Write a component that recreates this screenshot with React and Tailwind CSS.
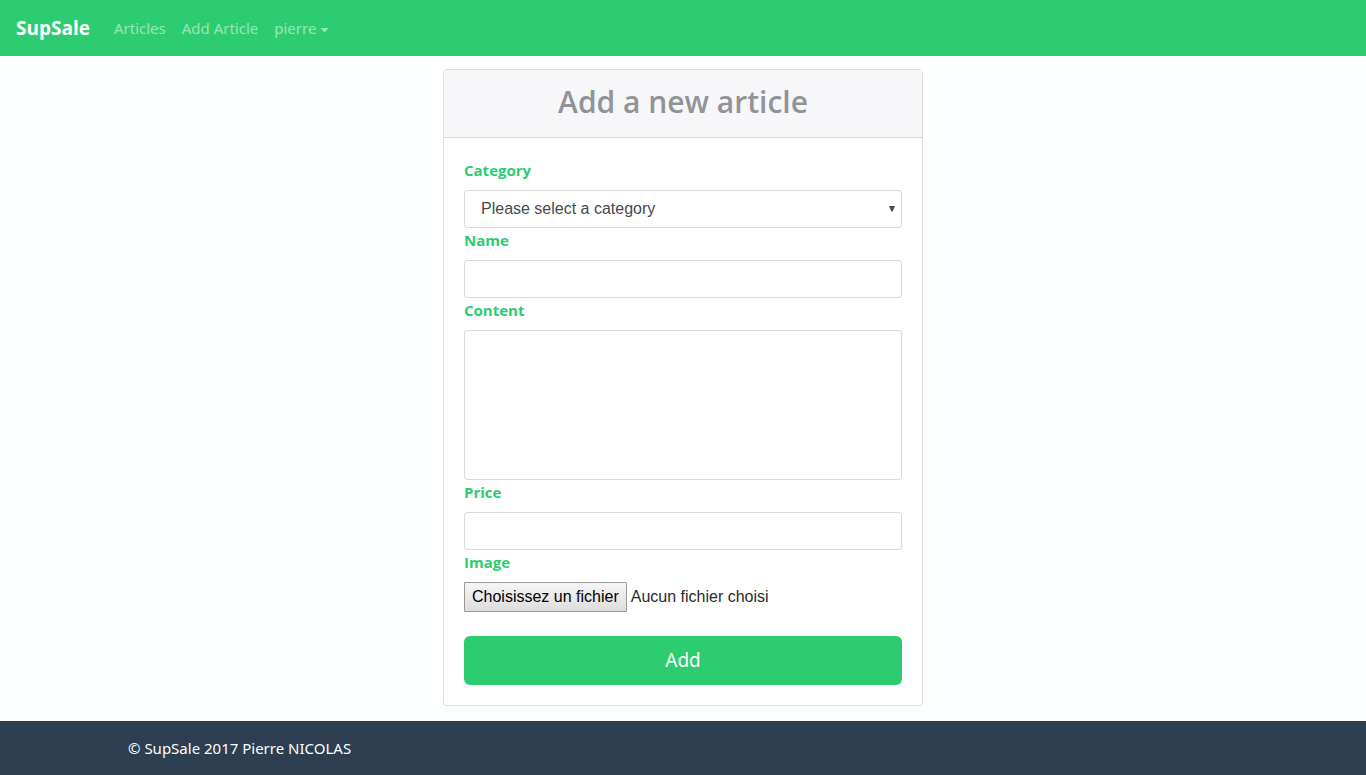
import { useState } from "react";

const labelClass =
  "mb-2 block self-start text-[15px] leading-6 font-bold text-[#2ecc71]";
const fieldClass =
  "block w-full rounded border border-black/15 bg-white px-3 font-['Liberation_Sans',sans-serif] text-base text-[#464a4c] outline-none focus:border-[#2ecc71]";

function Navbar() {
  const linkClass = "text-white/50 hover:text-white/75";
  return (
    <nav className="flex h-14 items-center bg-[#2ecc71] px-4">
      <a href="#home" className="mr-6 text-[19px] leading-[30px] font-bold text-white">
        SupSale
      </a>
      <ul className="flex items-center gap-4 font-['Noto_Sans',sans-serif] text-[15px] leading-6">
        <li>
          <a href="#articles" className={linkClass}>Articles</a>
        </li>
        <li>
          <a href="#add" className={linkClass}>Add Article</a>
        </li>
        <li>
          <button type="button" className="flex items-center gap-1 text-white/50 hover:text-white/75">
            pierre
            <svg width="9" height="5" viewBox="0 0 9 5" className="mt-1 fill-current" aria-hidden="true">
              <path d="M0.5 0h8L4.5 4.5z" />
            </svg>
          </button>
        </li>
      </ul>
    </nav>
  );
}

function ArticleForm() {
  const [fileName, setFileName] = useState("");
  return (
    <form className="flex flex-col p-5" onSubmit={(e) => e.preventDefault()}>
      <label htmlFor="category" className={labelClass}>Category</label>
      <div className="grid items-center">
        <select
          id="category"
          defaultValue=""
          className={`${fieldClass} col-start-1 row-start-1 h-[38px] appearance-none pl-4`}
        >
          <option value="">Please select a category</option>
        </select>
        <svg
          width="6"
          height="6"
          viewBox="0 0 6 6"
          className="pointer-events-none col-start-1 row-start-1 mr-[7px] justify-self-end fill-[#464a4c]"
          aria-hidden="true"
        >
          <path d="M0 0h6L3.6 5.5H2.4z" />
        </svg>
      </div>

      <label htmlFor="name" className={labelClass}>Name</label>
      <input id="name" type="text" className={`${fieldClass} h-[38px]`} />

      <label htmlFor="content" className={labelClass}>Content</label>
      <textarea id="content" className={`${fieldClass} h-[150px] resize-none py-2`} />

      <label htmlFor="price" className={labelClass}>Price</label>
      <input id="price" type="text" className={`${fieldClass} h-[38px]`} />

      <label htmlFor="image" className={labelClass}>Image</label>
      <div className="flex items-center gap-1 font-['Liberation_Sans',sans-serif] text-base leading-7 text-[#292b2c]">
        <input
          id="image"
          type="file"
          className="peer sr-only"
          onChange={(e) => setFileName(e.target.files?.[0]?.name ?? "")}
        />
        <label
          htmlFor="image"
          className="rounded-[1px] border border-[#999999] bg-linear-to-b from-[#f6f6f6] to-[#dddddd] px-[7px] text-black peer-focus-visible:outline-2"
        >
          Choisissez un fichier
        </label>
        <span>{fileName || "Aucun fichier choisi"}</span>
      </div>

      <button
        type="submit"
        className="mt-6 h-[49px] rounded-md bg-[#2ecc71] font-['Noto_Sans',sans-serif] text-[19px] text-white hover:bg-[#29b765]"
      >
        Add
      </button>
    </form>
  );
}

export default function App() {
  return (
    <div className="flex min-h-screen flex-col bg-[#fdfffe] font-['Open_Sans','Noto_Sans',sans-serif]">
      <Navbar />
      <main className="flex-1 pt-[13px] pb-[15px]">
        <section className="mx-auto w-full max-w-[480px] rounded border border-black/12 bg-white">
          <header className="border-b border-black/12 bg-[#f7f7f9] pt-3.5 pb-[18px] text-center">
            <h1 className="text-[30px] leading-[35px] font-semibold text-[#919496]">
              Add a new article
            </h1>
          </header>
          <ArticleForm />
        </section>
      </main>
      <footer className="bg-[#2c3e50] px-32 py-[15px] font-['Noto_Sans',sans-serif] text-[15px] leading-6 text-white">
        © SupSale 2017 Pierre NICOLAS
      </footer>
    </div>
  );
}
